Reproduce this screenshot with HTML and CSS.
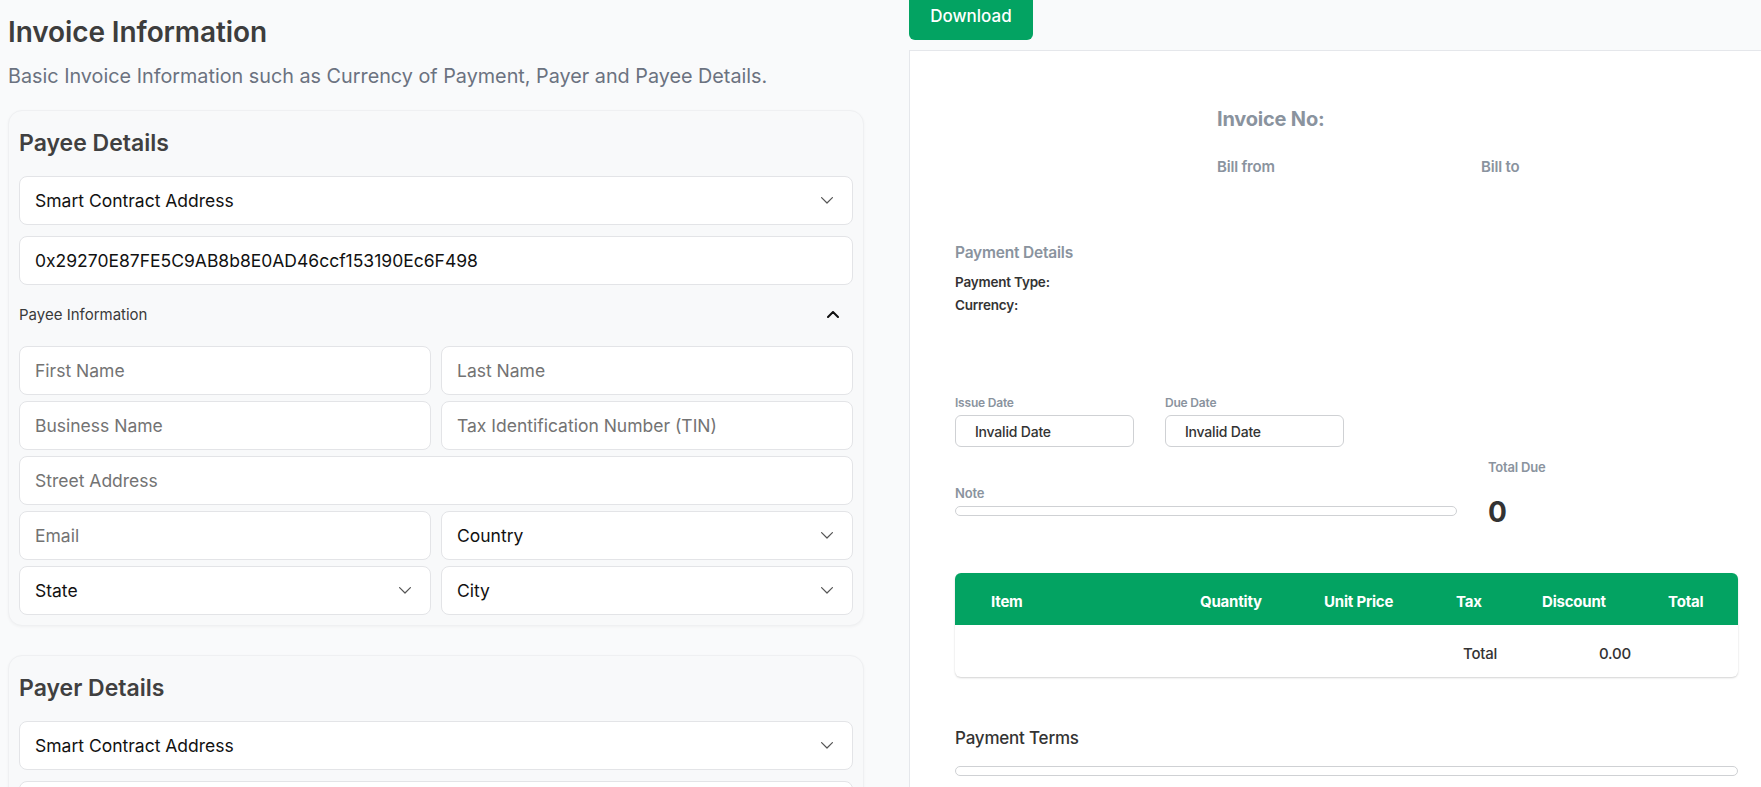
FILE: index.html
```html
<!DOCTYPE html>
<html lang="en">
<head>
<meta charset="utf-8">
<title>Invoice Information</title>
<link rel="stylesheet" href="styles.css">
</head>
<body>
<div class="page">
  <section class="form-col">
    <h1 class="title">Invoice Information</h1>
    <p class="subtitle">Basic Invoice Information such as Currency of Payment, Payer and Payee Details.</p>

    <div class="card">
      <h2 class="card-title">Payee Details</h2>
      <div class="field select">
        <span class="value">Smart Contract Address</span>
        <svg class="chev" width="12" height="7" viewBox="0 0 12 7"><path d="M0.6 0.6L6 6L11.4 0.6" fill="none" stroke="#555" stroke-width="1.2" stroke-linecap="round" stroke-linejoin="round"/></svg>
      </div>
      <div class="field spaced">
        <span class="value">0x29270E87FE5C9AB8b8E0AD46ccf153190Ec6F498</span>
      </div>
      <div class="toggle">
        <span>Payee Information</span>
        <svg class="chev-up" width="12" height="7" viewBox="0 0 12 7"><path d="M1 6L6 1L11 6" fill="none" stroke="#111" stroke-width="2" stroke-linecap="round" stroke-linejoin="round"/></svg>
      </div>
      <div class="grid">
        <div class="field"><span class="ph">First Name</span></div>
        <div class="field"><span class="ph">Last Name</span></div>
        <div class="field"><span class="ph">Business Name</span></div>
        <div class="field"><span class="ph">Tax Identification Number (TIN)</span></div>
        <div class="field wide"><span class="ph">Street Address</span></div>
        <div class="field"><span class="ph">Email</span></div>
        <div class="field select">
          <span class="value">Country</span>
          <svg class="chev" width="12" height="7" viewBox="0 0 12 7"><path d="M0.6 0.6L6 6L11.4 0.6" fill="none" stroke="#555" stroke-width="1.2" stroke-linecap="round" stroke-linejoin="round"/></svg>
        </div>
        <div class="field select">
          <span class="value">State</span>
          <svg class="chev" width="12" height="7" viewBox="0 0 12 7"><path d="M0.6 0.6L6 6L11.4 0.6" fill="none" stroke="#555" stroke-width="1.2" stroke-linecap="round" stroke-linejoin="round"/></svg>
        </div>
        <div class="field select">
          <span class="value">City</span>
          <svg class="chev" width="12" height="7" viewBox="0 0 12 7"><path d="M0.6 0.6L6 6L11.4 0.6" fill="none" stroke="#555" stroke-width="1.2" stroke-linecap="round" stroke-linejoin="round"/></svg>
        </div>
      </div>
    </div>

    <div class="card second">
      <h2 class="card-title">Payer Details</h2>
      <div class="field select">
        <span class="value">Smart Contract Address</span>
        <svg class="chev" width="12" height="7" viewBox="0 0 12 7"><path d="M0.6 0.6L6 6L11.4 0.6" fill="none" stroke="#555" stroke-width="1.2" stroke-linecap="round" stroke-linejoin="round"/></svg>
      </div>
      <div class="field spaced">
        <span class="value"></span>
      </div>
    </div>
  </section>

  <section class="preview-col">
    <button class="download">Download</button>
    <div class="invoice">
      <div class="inv-head">
        <div></div>
        <div>
          <div class="inv-no">Invoice No:</div>
          <div class="bill">Bill from</div>
        </div>
        <div>
          <div class="inv-no blank">&nbsp;</div>
          <div class="bill">Bill to</div>
        </div>
      </div>

      <div class="pay-details">
        <div class="pd-title">Payment Details</div>
        <div class="pd-line">Payment Type:</div>
        <div class="pd-line">Currency:</div>
      </div>

      <div class="dates">
        <div class="date-block">
          <div class="small-label">Issue Date</div>
          <div class="date-box">Invalid Date</div>
        </div>
        <div class="date-block">
          <div class="small-label">Due Date</div>
          <div class="date-box">Invalid Date</div>
        </div>
      </div>

      <div class="note-row">
        <div class="note-col">
          <div class="small-label">Note</div>
          <div class="note-box"></div>
        </div>
        <div class="due-col">
          <div class="small-label">Total Due</div>
          <div class="due-amount">0</div>
        </div>
      </div>

      <div class="items">
        <div class="items-head">
          <span>Item</span>
          <span>Quantity</span>
          <span>Unit Price</span>
          <span>Tax</span>
          <span>Discount</span>
          <span>Total</span>
        </div>
        <div class="items-total">
          <span></span>
          <span>Total</span>
          <span>0.00</span>
        </div>
      </div>

      <div class="terms-label">Payment Terms</div>
      <div class="terms-box"></div>
    </div>
  </section>
</div>
</body>
</html>
```

FILE: styles.css
```css
html, body {
  margin: 0;
  padding: 0;
  height: 100%;
  overflow: hidden;
}
body {
  background: #f9fafb;
  font-family: Inter, "Noto Sans", "Liberation Sans", sans-serif;
  color: #333;
}
.page {
  display: flex;
  align-items: flex-start;
}
.form-col {
  width: 856px;
  margin-left: 8px;
  flex: none;
}
.title {
  margin: 0;
  padding-top: 14px;
  font-size: 28px;
  line-height: 36px;
  font-weight: 600;
  color: #3d3d3d;
  letter-spacing: -0.1px;
}
.subtitle {
  margin: 12px 0 0;
  font-size: 19.8px;
  line-height: 28px;
  color: #6b7280;
  font-weight: 400;
}
.card {
  margin-top: 20px;
  background: #f8f9fa;
  border: 1px solid #eff0f2;
  border-radius: 14px;
  box-shadow: 0 1px 3px rgba(0, 0, 0, 0.04);
  padding: 16px 10px 10px;
}
.card.second {
  margin-top: 29px;
}
.card-title {
  margin: 0 0 17px;
  font-size: 23px;
  line-height: 32px;
  font-weight: 600;
  color: #404040;
}
.field {
  box-sizing: border-box;
  height: 49px;
  background: #fff;
  border: 1px solid #e3e4e7;
  border-radius: 8px;
  padding: 0 19px 0 15px;
  display: flex;
  align-items: center;
  justify-content: space-between;
  font-size: 17.5px;
}
.field.spaced {
  margin-top: 11px;
}
.value {
  color: #111;
}
.ph {
  color: #737373;
}
.chev {
  flex: none;
}
.toggle {
  margin-top: 20px;
  display: flex;
  align-items: center;
  justify-content: space-between;
  padding-right: 14px;
  font-size: 15px;
  line-height: 20px;
  font-weight: 400;
  color: #3a3a3a;
}
.chev-up {
  flex: none;
  margin-top: -2px;
}
.grid {
  margin-top: 21px;
  display: grid;
  grid-template-columns: 1fr 1fr;
  column-gap: 10px;
  row-gap: 6px;
}
.grid .wide {
  grid-column: 1 / span 2;
}

/* preview */
.preview-col {
  margin-left: 45px;
  flex: 1;
  min-width: 0;
}
.download {
  display: block;
  margin-top: -8px;
  height: 48px;
  width: 124px;
  padding: 0;
  border: none;
  border-radius: 6px;
  background: #03a362;
  color: #fff;
  font-family: Inter, "Noto Sans", sans-serif;
  font-size: 17px;
  font-weight: 500;
  text-align: center;
}
.invoice {
  margin-top: 10px;
  background: #fff;
  border-top: 1px solid #e5e7eb;
  border-left: 1px solid #e5e7eb;
  padding: 54px 23px 0 45px;
  height: 1200px;
}
.inv-head {
  display: grid;
  grid-template-columns: 262px 264px 1fr;
}
.inv-no {
  font-size: 20px;
  line-height: 28px;
  font-weight: 700;
  color: #8a939e;
  letter-spacing: -0.2px;
}
.bill {
  margin-top: 24px;
  font-size: 15px;
  line-height: 20px;
  font-weight: 600;
  color: #8a939e;
  letter-spacing: -0.2px;
}
.pay-details {
  margin-top: 65px;
}
.pd-title {
  font-size: 15.5px;
  line-height: 22px;
  font-weight: 600;
  color: #8a939e;
  letter-spacing: -0.2px;
}
.pd-line {
  font-size: 13.5px;
  line-height: 23px;
  font-weight: 600;
  color: #333;
  letter-spacing: -0.2px;
}
.pd-title + .pd-line {
  margin-top: 7px;
}
.dates {
  margin-top: 78px;
  display: flex;
  gap: 31px;
}
.date-block {
  width: 179px;
}
.small-label {
  font-size: 12px;
  line-height: 16px;
  font-weight: 600;
  color: #8a939e;
  letter-spacing: -0.2px;
}
.date-box {
  box-sizing: border-box;
  margin-top: 4px;
  height: 32px;
  border: 1px solid #cfd1d4;
  border-radius: 6px;
  padding-left: 19px;
  display: flex;
  align-items: center;
  font-size: 14px;
  font-weight: 500;
  color: #333;
  letter-spacing: -0.2px;
}
.note-row {
  margin-top: 11px;
  display: flex;
  align-items: flex-start;
  gap: 31px;
}
.note-col {
  width: 502px;
  padding-top: 26px;
}
.note-row .small-label {
  font-size: 13px;
  line-height: 18px;
}
.note-box {
  box-sizing: border-box;
  margin-top: 4px;
  height: 10px;
  border: 1px solid #cfd1d4;
  border-radius: 5px;
}
.due-amount {
  margin-top: 19px;
  font-size: 28px;
  line-height: 34px;
  font-weight: 700;
  color: #333;
}
.items {
  margin-top: 44px;
  border-radius: 6px;
  box-shadow: 0 1px 2px rgba(0, 0, 0, 0.18);
  background: #fff;
}
.items-head {
  display: grid;
  grid-template-columns: 209px 124px 132px 86px 126px auto;
  padding: 6px 0 0 36px;
  height: 52px;
  box-sizing: border-box;
  align-items: center;
  background: #03a362;
  border-radius: 6px 6px 0 0;
  color: #fff;
  font-size: 15px;
  line-height: 20px;
  font-weight: 700;
  letter-spacing: -0.2px;
}
.items-total {
  display: grid;
  grid-template-columns: 508px 136px auto;
  height: 52px;
  box-sizing: border-box;
  padding-top: 19px;
  font-size: 15px;
  line-height: 20px;
  font-weight: 500;
  color: #333;
  letter-spacing: -0.2px;
}
.terms-label {
  margin-top: 49px;
  font-size: 17px;
  line-height: 24px;
  font-weight: 500;
  color: #333;
  letter-spacing: -0.2px;
}
.terms-box {
  box-sizing: border-box;
  margin-top: 16px;
  height: 10px;
  border: 1px solid #cfd1d4;
  border-radius: 5px;
}
```
